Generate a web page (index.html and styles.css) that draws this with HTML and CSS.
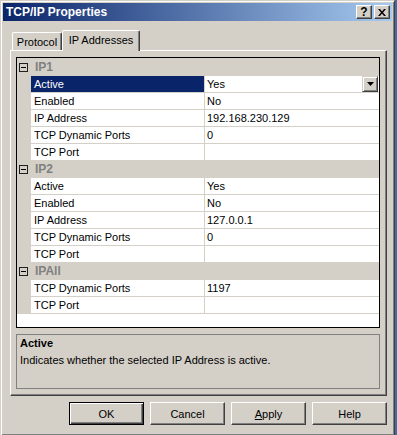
FILE: index.html
```html
<!DOCTYPE html>
<html lang="en">
<head>
<meta charset="UTF-8">
<title>TCP/IP Properties</title>
<link rel="stylesheet" href="styles.css">
</head>
<body>
<div class="window">
  <div class="titlebar">
    <span class="title">TCP/IP Properties</span>
    <div class="caption-buttons">
      <div class="cap-btn help">?</div>
      <div class="cap-btn">
        <svg width="8" height="7" viewBox="0 0 8 7"><path d="M0 0h2l2 2.5 2-2.5h2l-3 3.5 3 3.5h-2l-2-2.5-2 2.5h-2l3-3.5z" fill="#000"/></svg>
      </div>
    </div>
  </div>
  <div class="client">
    <div class="tabs">
      <div class="tab">Protocol</div>
      <div class="tab active">IP Addresses</div>
    </div>
    <div class="panel">
      <div class="grid">
        <div class="category"><div class="gutter"><span class="toggle"></span></div><div class="cat-name">IP1</div></div>
        <div class="row"><div class="gutter"></div><div class="name selected">Active</div><div class="value">Yes<span class="drop"><svg width="7" height="4" viewBox="0 0 7 4"><path d="M0 0h7l-3.5 4z" fill="#000"/></svg></span></div></div>
        <div class="row"><div class="gutter"></div><div class="name">Enabled</div><div class="value">No</div></div>
        <div class="row"><div class="gutter"></div><div class="name">IP Address</div><div class="value">192.168.230.129</div></div>
        <div class="row"><div class="gutter"></div><div class="name">TCP Dynamic Ports</div><div class="value">0</div></div>
        <div class="row"><div class="gutter"></div><div class="name">TCP Port</div><div class="value"></div></div>
        <div class="category"><div class="gutter"><span class="toggle"></span></div><div class="cat-name">IP2</div></div>
        <div class="row"><div class="gutter"></div><div class="name">Active</div><div class="value">Yes</div></div>
        <div class="row"><div class="gutter"></div><div class="name">Enabled</div><div class="value">No</div></div>
        <div class="row"><div class="gutter"></div><div class="name">IP Address</div><div class="value">127.0.0.1</div></div>
        <div class="row"><div class="gutter"></div><div class="name">TCP Dynamic Ports</div><div class="value">0</div></div>
        <div class="row"><div class="gutter"></div><div class="name">TCP Port</div><div class="value"></div></div>
        <div class="category"><div class="gutter"><span class="toggle"></span></div><div class="cat-name">IPAll</div></div>
        <div class="row"><div class="gutter"></div><div class="name">TCP Dynamic Ports</div><div class="value">1197</div></div>
        <div class="row last"><div class="gutter"></div><div class="name">TCP Port</div><div class="value"></div></div>
      </div>
      <div class="desc">
        <div class="desc-title">Active</div>
        <div class="desc-text">Indicates whether the selected IP Address is active.</div>
      </div>
    </div>
    <div class="buttons">
      <button class="btn default">OK</button>
      <button class="btn">Cancel</button>
      <button class="btn"><u>A</u>pply</button>
      <button class="btn">Help</button>
    </div>
  </div>
</div>
</body>
</html>
```

FILE: styles.css
```css
body {
  margin: 0;
  background: #3a6ea5;
  font-family: "Liberation Sans", Arial, sans-serif;
  font-size: 11px;
  color: #000;
}
.window {
  width: 395px;
  height: 436px;
  box-sizing: border-box;
  background: #d4d0c8;
  border: 1px solid;
  border-color: #d4d0c8 #404040 #404040 #d4d0c8;
  box-shadow: inset 1px 1px #fff, inset -1px -1px #808080;
  padding: 2px;
}
.titlebar {
  height: 18px;
  display: flex;
  align-items: center;
  justify-content: space-between;
  padding: 0 2px 0 3px;
  background: linear-gradient(90deg, #0a246a, #a6caf0);
}
.title {
  color: #fff;
  font-weight: bold;
  font-size: 12px;
}
.caption-buttons {
  display: flex;
  gap: 2px;
}
.cap-btn {
  width: 16px;
  height: 14px;
  box-sizing: border-box;
  background: #d4d0c8;
  border: 1px solid;
  border-color: #fff #404040 #404040 #fff;
  box-shadow: inset -1px -1px #808080;
  display: flex;
  align-items: center;
  justify-content: center;
}
.cap-btn.help {
  font-weight: bold;
  font-size: 12px;
  line-height: 12px;
}
.client {
  padding: 9px 0 0 7px;
}
.tabs {
  display: flex;
  align-items: flex-end;
  height: 21px;
  padding-left: 2px;
  margin-bottom: -1px;
}
.tab {
  box-sizing: border-box;
  height: 18px;
  width: 50px;
  margin-bottom: 1px;
  padding-top: 2px;
  line-height: 14px;
  text-align: center;
  background: #d4d0c8;
  border: 1px solid;
  border-color: #fff #404040 transparent #fff;
  border-bottom: none;
  border-radius: 2px 2px 0 0;
  box-shadow: inset -1px 0 #808080;
}
.tab.active {
  position: relative;
  z-index: 1;
  width: 78px;
  height: 21px;
  margin-bottom: 0;
}
.panel {
  width: 377px;
  height: 346px;
  box-sizing: border-box;
  border: 1px solid;
  border-color: #fff #404040 #404040 #fff;
  box-shadow: inset -1px -1px #808080;
  padding: 6px 0 0 5px;
}
.grid {
  width: 364px;
  height: 271px;
  box-sizing: border-box;
  border: 1px solid #000;
  background: #fff;
}
.row, .category {
  display: grid;
  grid-template-columns: 14px 174px 1fr;
  height: 17px;
  box-sizing: border-box;
  border-top: 1px solid #d4d0c8;
  line-height: 16px;
}
.row.last {
  height: 18px;
  border-bottom: 1px solid #d4d0c8;
}
.category {
  background: #d4d0c8;
}
.gutter {
  background: #d4d0c8;
  display: flex;
  align-items: center;
  padding-left: 2px;
}
.toggle {
  width: 9px;
  height: 9px;
  box-sizing: border-box;
  border: 1px solid #202020;
  display: flex;
  align-items: center;
  justify-content: center;
}
.toggle::after {
  content: "";
  width: 5px;
  height: 1px;
  background: #000;
}
.cat-name {
  grid-column: 2 / 4;
  padding-left: 4px;
  font-weight: bold;
  font-size: 12px;
  color: #808080;
}
.name {
  border-right: 1px solid #d4d0c8;
  padding-left: 3px;
  white-space: nowrap;
}
.name.selected {
  background: #0a246a;
  color: #fff;
}
.value {
  display: flex;
  align-items: center;
  padding-left: 2px;
}
.drop {
  margin-left: auto;
  margin-right: 1px;
  width: 16px;
  height: 16px;
  box-sizing: border-box;
  background: #d4d0c8;
  border: 1px solid;
  border-color: #d4d0c8 #404040 #404040 #d4d0c8;
  box-shadow: inset 1px 1px #fff, inset -1px -1px #808080;
  display: flex;
  align-items: center;
  justify-content: center;
}
.desc {
  width: 364px;
  height: 55px;
  box-sizing: border-box;
  margin-top: 6px;
  border: 1px solid #808080;
  padding: 1px 3px;
  line-height: 15px;
}
.desc-title {
  font-weight: bold;
}
.desc-text {
  margin-top: 2px;
}
.buttons {
  width: 377px;
  display: flex;
  justify-content: flex-end;
  gap: 6px;
  margin-top: 6px;
}
.btn {
  width: 75px;
  height: 23px;
  box-sizing: border-box;
  padding: 0;
  font-family: "Liberation Sans", Arial, sans-serif;
  font-size: 11px;
  color: #000;
  background: #d4d0c8;
  border: 1px solid;
  border-color: #fff #404040 #404040 #fff;
  box-shadow: inset -1px -1px #808080;
}
.btn.default {
  border-color: #000;
  box-shadow: inset 1px 1px #fff, inset -1px -1px #404040, inset -2px -2px #808080;
}
```
